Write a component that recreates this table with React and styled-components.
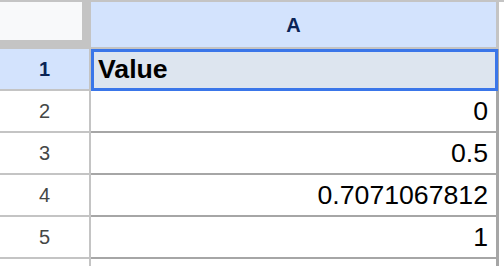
import React from "react";
import styled, { createGlobalStyle } from "styled-components";

const GlobalStyle = createGlobalStyle`
  *, *::before, *::after {
    box-sizing: border-box;
  }
  html, body {
    margin: 0;
    padding: 0;
    background: #ffffff;
    font-family: "Liberation Sans", Arial, sans-serif;
  }
`;

const Sheet = styled.div`
  width: 504px;
  height: 266px;
  overflow: hidden;
  border-top: 2px solid #c4c4c4;
`;

const Row = styled.div`
  display: flex;
  height: ${(p) => p.$h}px;
`;

const Corner = styled.div`
  width: 91px;
  flex: none;
  background: #c4c4c4;
  display: flex;
  align-items: flex-start;
`;

const CornerBox = styled.div`
  width: 82px;
  height: 38px;
  background: #f8f9fa;
`;

const ColHeader = styled.div`
  width: 408px;
  flex: none;
  background: #d3e3fd;
  border-bottom: 2px solid #c4c4c4;
  border-right: 3px solid #c4c4c4;
  display: flex;
  align-items: center;
  justify-content: center;
  font-size: 20px;
  font-weight: bold;
  color: #0b2556;
  padding-top: 1px;
`;

const RowHeader = styled.div`
  width: 91px;
  flex: none;
  background: ${(p) => (p.$active ? "#d3e3fd" : "#ffffff")};
  border-right: 2px solid #c4c4c4;
  border-bottom: 2px solid #c4c4c4;
  display: flex;
  align-items: center;
  justify-content: center;
  font-size: 20px;
  font-weight: ${(p) => (p.$active ? "bold" : "normal")};
  color: ${(p) => (p.$active ? "#0b2556" : "#444746")};
`;

const Cell = styled.div`
  position: relative;
  width: 408px;
  flex: none;
  background: ${(p) => (p.$active ? "#dde5ef" : "#ffffff")};
  border-bottom: 2px solid #a6a6a6;
  border-right: 3px solid #a6a6a6;
  display: flex;
  align-items: flex-end;
  justify-content: ${(p) => (p.$num ? "flex-end" : "flex-start")};
  padding: 0 8px 5px 7px;
  font-size: 26.67px;
  font-weight: ${(p) => (p.$bold ? "bold" : "normal")};
  color: #000000;
  line-height: 30px;
`;

const Selection = styled.div`
  position: absolute;
  left: 0;
  top: 0;
  right: -2px;
  bottom: -2px;
  border: 3px solid #3a76e9;
  pointer-events: none;
`;

const rows = [
  { n: "1", v: "Value", bold: true, active: true },
  { n: "2", v: "0", num: true },
  { n: "3", v: "0.5", num: true },
  { n: "4", v: "0.7071067812", num: true },
  { n: "5", v: "1", num: true },
  { n: "", v: "", num: true },
];

export default function App() {
  return (
    <>
      <GlobalStyle />
      <Sheet>
        <Row $h={47}>
          <Corner>
            <CornerBox />
          </Corner>
          <ColHeader>A</ColHeader>
        </Row>
        {rows.map((r, i) => (
          <Row key={i} $h={42}>
            <RowHeader $active={r.active}>{r.n}</RowHeader>
            <Cell $active={r.active} $num={r.num} $bold={r.bold}>
              {r.v}
              {r.active && <Selection />}
            </Cell>
          </Row>
        ))}
      </Sheet>
    </>
  );
}
